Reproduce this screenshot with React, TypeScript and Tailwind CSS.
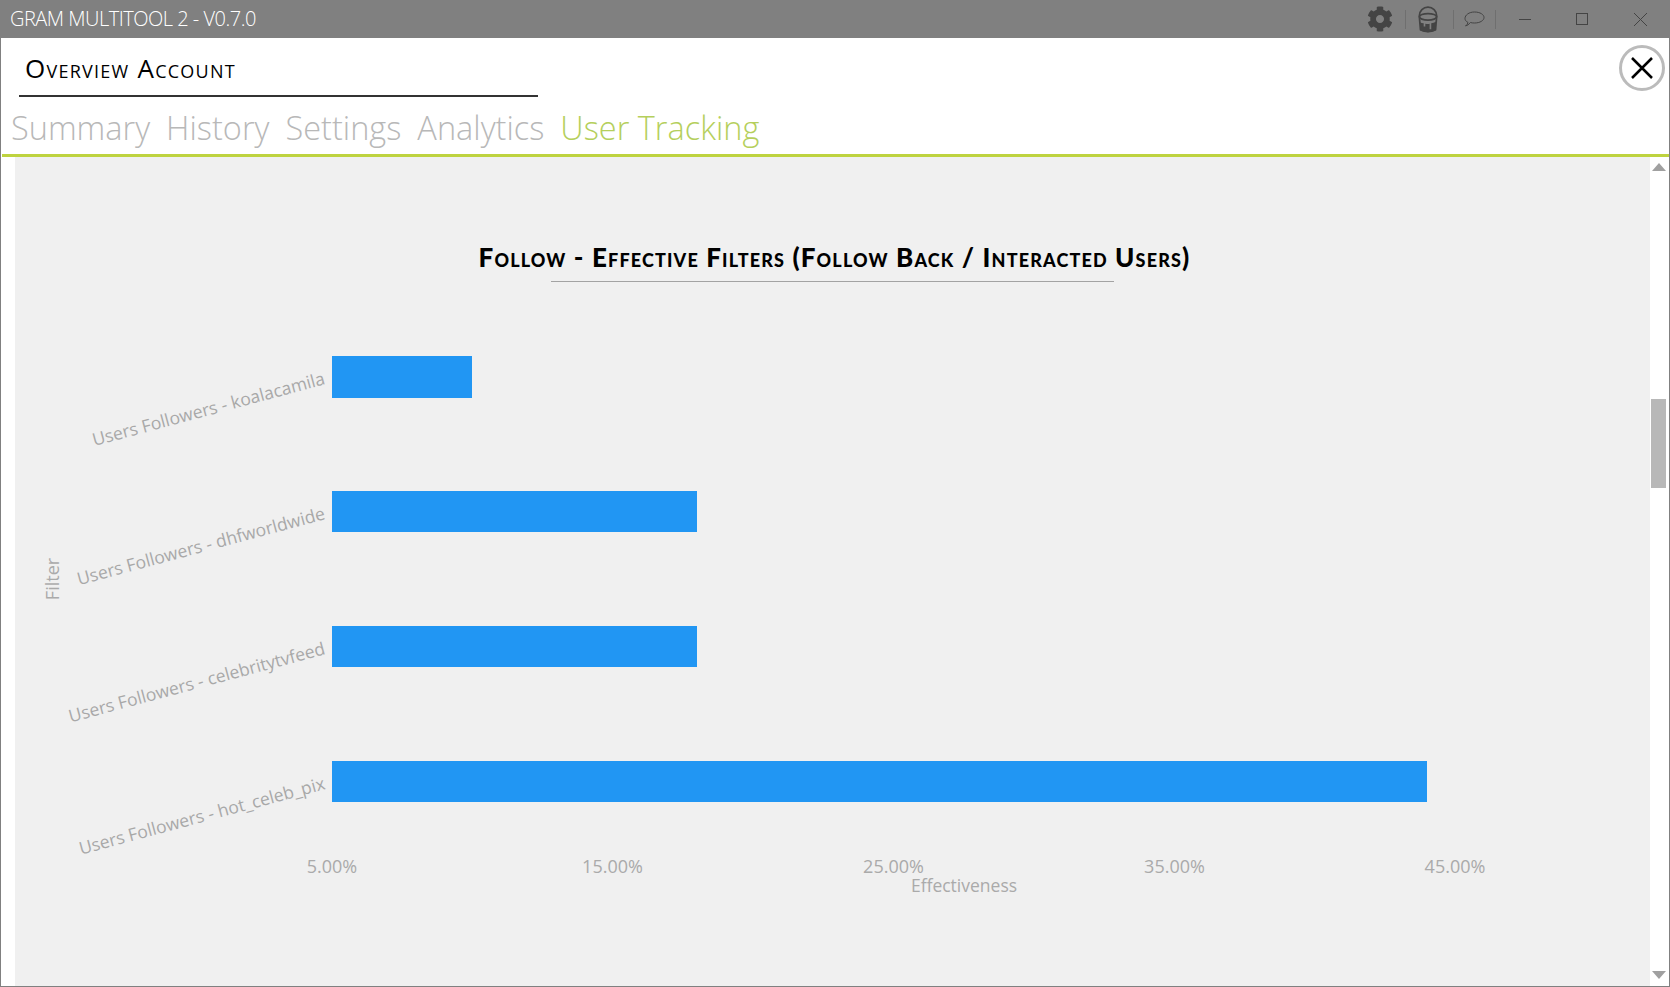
import { FaCog } from 'react-icons/fa';

const tabs = ['Summary', 'History', 'Settings', 'Analytics'];

const bars = [
  { label: 'Users Followers - koalacamila', y: 66, width: 140, height: 42, labelY: 93 },
  { label: 'Users Followers - dhfworldwide', y: 201, width: 365, height: 41, labelY: 228 },
  { label: 'Users Followers - celebritytvfeed', y: 336, width: 365, height: 41, labelY: 363 },
  { label: 'Users Followers - hot_celeb_pix', y: 471, width: 1095, height: 41, labelY: 498 },
];

const ticks = [
  { label: '5.00%', x: 317 },
  { label: '15.00%', x: 597.5 },
  { label: '25.00%', x: 878.5 },
  { label: '35.00%', x: 1159.5 },
  { label: '45.00%', x: 1440 },
];

function BucketIcon() {
  return (
    <svg width="22" height="27" viewBox="0 0 20 25" fill="none" stroke="#444" strokeWidth="1.6">
      <path d="M2 10V9a8 8 0 0 1 16 0v1" />
      <ellipse cx="10" cy="10" rx="8" ry="3" />
      <path d="M2 10l1 12q7 3 14 0l1-12" />
      <path
        d="M2.5 15q1.5 1 3.500 1v3h1.500v-2.500q3 .5 4 0v5h1.500v-5.500q2-.3 4.500-1.500l-.5 8.500q-7 3-14 0z"
        fill="#444"
        stroke="none"
      />
    </svg>
  );
}

function CommentIcon() {
  return (
    <svg width="21" height="16" viewBox="0 0 21 16" fill="none" stroke="#444" strokeWidth="1">
      <path d="M4 11.500C2 10.500 1 9 1 7.500C1 4 5 1 10.500 1S20 3.500 20 6.500S16 12 10.500 12Q8 12 6.500 11.500Q4 14.500 1.500 15Q3.500 13.500 4 11.500Z" />
    </svg>
  );
}

function Separator() {
  return <div className="w-px h-[19px] bg-[#6f6f6f]" />;
}

export default function App() {
  return (
    <div className="w-[1670px] h-[987px] flex flex-col overflow-hidden bg-white border-x border-b border-[#808080] font-['Open_Sans',sans-serif]">
      {/* Title bar */}
      <div className="h-[38px] -mx-px shrink-0 flex items-center bg-[#808080]">
        <span className="ml-[10px] text-[20px] font-light text-white whitespace-nowrap tracking-[-0.5px]">
          GRAM MULTITOOL 2 - V0.7.0
        </span>
        <div className="ml-auto flex items-center h-full">
          <FaCog className="text-[#444] w-[26px] h-[26px]" />
          <div className="ml-[12px]"><Separator /></div>
          <div className="ml-[11px]"><BucketIcon /></div>
          <div className="ml-[14px]"><Separator /></div>
          <div className="ml-[10px]"><CommentIcon /></div>
          <div className="ml-[10px]"><Separator /></div>
          <div className="ml-[23px] w-[12px] h-px bg-[#444]" />
          <div className="ml-[45px] w-[12px] h-[12px] border border-[#444]" />
          <svg className="ml-[46px] mr-[23px]" width="13" height="13" viewBox="0 0 13 13" stroke="#444" strokeWidth="1">
            <path d="M0 0l13 13M13 0L0 13" />
          </svg>
        </div>
      </div>

      {/* Header */}
      <div className="h-[59px] shrink-0 flex items-start justify-between">
        <div className="ml-[18px] w-[519px] h-[59px] flex items-center pl-[6px] pt-[3px] border-b-2 border-[#333]">
          <span className="text-[26px] tracking-[1.25px] text-black [font-variant:small-caps] whitespace-nowrap">Overview Account</span>
        </div>
        <div className="mt-[7px] mr-[4px] w-[46px] h-[46px] rounded-full border-[3px] border-[#bbb] flex items-center justify-center">
          <svg width="22" height="22" viewBox="0 0 22 22" stroke="#000" strokeWidth="2.500">
            <path d="M1 1l20 20M21 1L1 21" />
          </svg>
        </div>
      </div>

      {/* Tabs */}
      <div className="h-[60px] shrink-0 ml-px flex items-center gap-[16px] pl-[9px] pt-[5px] border-b-[3px] border-[#bed33f] text-[32.5px] font-light leading-none">
        {tabs.map(tab => (
          <span key={tab} className="text-[#b8b8b8]">{tab}</span>
        ))}
        <span className="text-[#b5cf5c]">User Tracking</span>
      </div>

      {/* Content */}
      <div className="flex-1 min-h-0 flex pl-[14px]">
        <div className="flex-1 bg-[#f0f0f0] flex flex-col items-center pt-[82px]">
          <h1 className="ml-[4px] text-[26px] leading-[36px] tracking-[1.15px] font-['Lato',sans-serif] font-black text-black [font-variant:small-caps] whitespace-nowrap">
            Follow - Effective Filters (Follow Back / Interacted Users)
          </h1>
          <div className="w-[563px] h-px bg-[#a3a3a3] mt-[6px]" />
          <svg width="1635" height="640" className="mt-[8px]" viewBox="0 0 1635 640">
            {bars.map(bar => (
              <g key={bar.label}>
                <rect x="317" y={bar.y} width={bar.width} height={bar.height} fill="#2196f3" />
                <text
                  x="311"
                  y={bar.labelY + 1}
                  textAnchor="end"
                  fontSize="17.5"
                  fill="#a8a8a8"
                  transform={`rotate(-15 311 ${bar.labelY + 1})`}
                >
                  {bar.label}
                </text>
              </g>
            ))}
            {ticks.map(tick => (
              <text key={tick.label} x={tick.x} y="583" textAnchor="middle" fontSize="18" fill="#aaa">
                {tick.label}
              </text>
            ))}
            <text x="949" y="602" textAnchor="middle" fontSize="17.5" fill="#aaa">Effectiveness</text>
            <text x="44" y="289" textAnchor="middle" fontSize="18" fill="#aaa" transform="rotate(-90 44 289)">Filter</text>
          </svg>
        </div>

        {/* Scrollbar */}
        <div className="w-[19px] shrink-0 flex flex-col items-start pl-px pt-[6px] pb-[7px]">
          <div className="ml-px w-0 h-0 border-x-[7.500px] border-x-transparent border-b-[8px] border-b-[#a0a0a0]" />
          <div className="w-[15px] h-[89px] bg-[#b8b8b8] mt-[228px]" />
          <div className="ml-px w-0 h-0 mt-auto border-x-[7.500px] border-x-transparent border-t-[8px] border-t-[#a0a0a0]" />
        </div>
      </div>
    </div>
  );
}
